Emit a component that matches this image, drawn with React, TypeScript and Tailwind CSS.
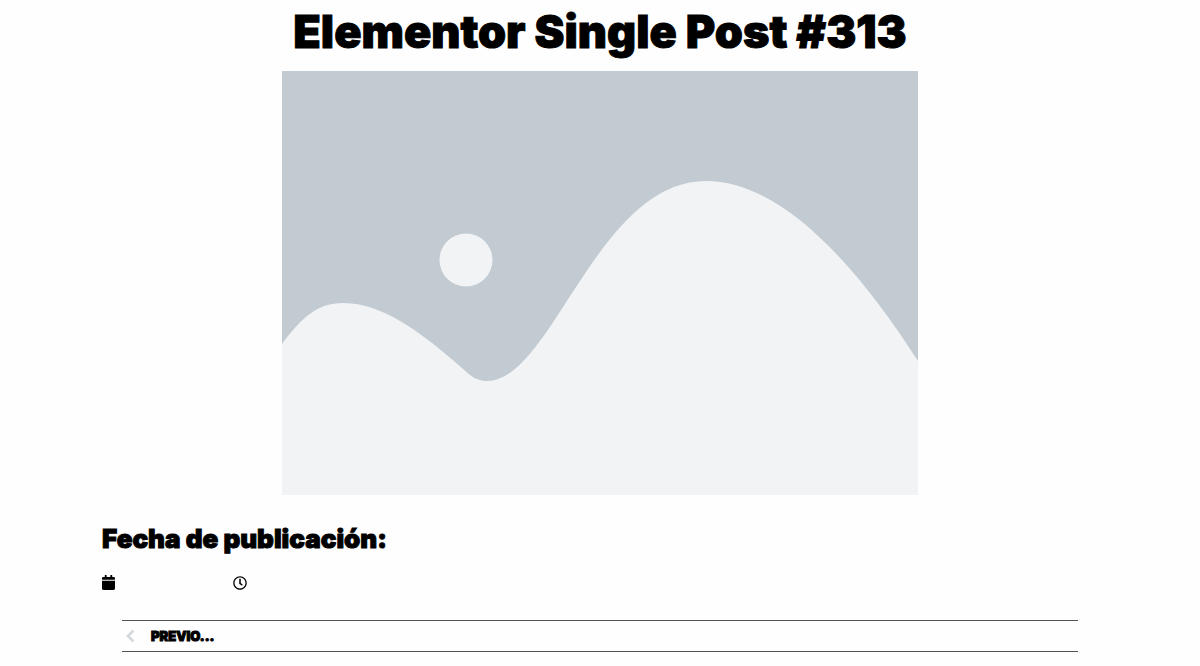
import { FaCalendar, FaRegClock } from 'react-icons/fa';

function Placeholder() {
  return (
    <svg
      role="img"
      aria-label="Placeholder image"
      viewBox="0 0 636 424"
      className="block w-full"
    >
      <rect width="636" height="424" fill="#c2cad2" />
      <path
        d="M0 273C20 246 36 232 61 232C105 232 147 268 188 304C193 308 199 310 205 310C270 310 315 110 424 110C500 110 575 195 636 290V424H0Z"
        fill="#f1f3f5"
      />
      <circle cx="184" cy="189" r="26.5" fill="#f1f3f5" />
    </svg>
  );
}

export default function App() {
  return (
    <main className="min-h-screen bg-[#fefefe] font-['Inter',sans-serif] text-black">
      <h1 className="pt-2 text-center text-[45px] leading-12 font-black [-webkit-text-stroke:1px_black]">
        Elementor Single Post #313
      </h1>
      <figure className="mx-auto mt-[15px] w-[53%]">
        <Placeholder />
      </figure>
      <section className="px-[8.5%] pt-7">
        <h2 className="text-[26px] leading-8 font-black [-webkit-text-stroke:1px_black]">
          Fecha de publicación:
        </h2>
        <ul className="mt-5 flex items-center">
          <li className="w-[131px]">
            <FaCalendar aria-label="Fecha" className="h-[15px] w-[13px]" />
          </li>
          <li>
            <FaRegClock aria-label="Hora" className="size-[14px]" />
          </li>
        </ul>
        <nav className="mx-5 mt-[30px] flex h-8 items-center border-y border-[#555555]">
          <a href="#previous" className="flex items-center pl-1">
            <svg viewBox="0 0 9 14" className="h-[14px] w-[9px]" fill="none" stroke="#d5d8dc" strokeWidth="2.6" aria-hidden="true">
              <path d="M7.5 1.5L2 7L7.5 12.5" />
            </svg>
            <span className="ml-4 text-[13px] leading-4 font-black [-webkit-text-stroke:1px_black]">
              PREVIO...
            </span>
          </a>
        </nav>
      </section>
    </main>
  );
}
